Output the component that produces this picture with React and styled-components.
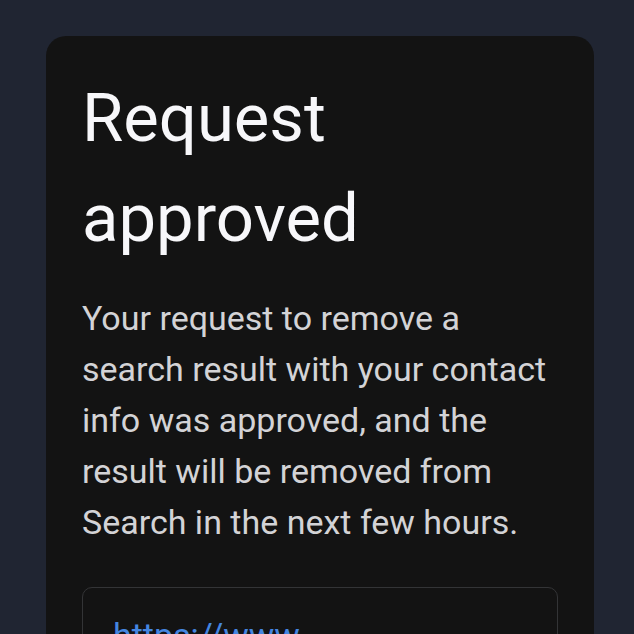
import React from "react";
import styled, { createGlobalStyle } from "styled-components";

const GlobalStyle = createGlobalStyle`
  html, body {
    margin: 0;
    padding: 0;
    background: #202532;
  }
  body {
    font-family: Roboto, "Noto Sans", sans-serif;
  }
`;

const Page = styled.div`
  min-height: 634px;
  padding: 36px 40px 36px 46px;
  box-sizing: border-box;
`;

const Card = styled.section`
  background: #131313;
  border-radius: 20px;
  padding: 32px 36px 40px;
  box-sizing: border-box;
`;

const Title = styled.h1`
  margin: 0;
  font-size: 67px;
  font-weight: 400;
  line-height: 100px;
  color: #f7f7fa;
`;

const Body = styled.p`
  margin: 25px 0 0;
  font-size: 34px;
  line-height: 51px;
  color: #d3d3d6;
`;

const LinkBox = styled.div`
  margin-top: 39px;
  border: 1px solid #333436;
  border-radius: 10px;
  padding: 22px 30px;
`;

const ResultLink = styled.a`
  font-size: 34px;
  line-height: 51px;
  color: #4586e0;
  text-decoration: none;
  overflow-wrap: break-word;
`;

export default function App() {
  return (
    <>
      <GlobalStyle />
      <Page>
        <Card>
          <Title>Request approved</Title>
          <Body>
            Your request to remove a search result with your contact info was
            approved, and the result will be removed from Search in the next
            few hours.
          </Body>
          <LinkBox>
            <ResultLink href="#">
              https://www.<wbr />examplepeoplesearchdirectory.com/profile/contact-info
            </ResultLink>
          </LinkBox>
        </Card>
      </Page>
    </>
  );
}
